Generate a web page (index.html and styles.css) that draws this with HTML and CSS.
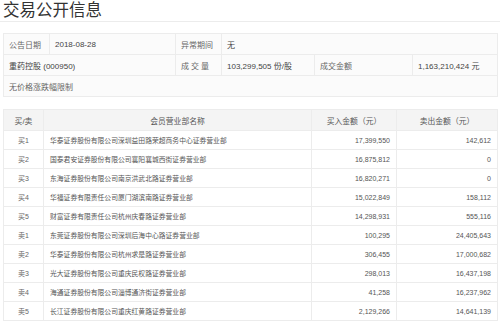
FILE: index.html
```html
<!DOCTYPE html>
<html lang="zh-CN">
<head>
  <meta charset="UTF-8">
  <title>交易公开信息</title>
  <link rel="stylesheet" href="styles.css">
</head>
<body>
  <div class="page-title">交易公开信息</div>

  <table class="info-table">
    <colgroup>
      <col style="width:46px"><col style="width:126px"><col style="width:46px">
      <col style="width:93px"><col style="width:98px"><col style="width:85px">
    </colgroup>
    <tr>
      <td class="label">公告日期</td>
      <td class="value">2018-08-28</td>
      <td class="label">异常期间</td>
      <td class="value" colspan="3">无</td>
    </tr>
    <tr>
      <td class="value" colspan="2">重药控股 (000950)</td>
      <td class="label spaced">成交量</td>
      <td class="value">103,299,505 份/股</td>
      <td class="label">成交金额</td>
      <td class="value">1,163,210,424 元</td>
    </tr>
    <tr>
      <td class="label" colspan="6">无价格涨跌幅限制</td>
    </tr>
  </table>

  <table class="trade-table">
    <colgroup>
      <col style="width:40px"><col style="width:268px"><col style="width:85px"><col style="width:101px">
    </colgroup>
    <thead>
      <tr>
        <th>买/卖</th>
        <th>会员营业部名称</th>
        <th>买入金额（元）</th>
        <th>卖出金额（元）</th>
      </tr>
    </thead>
    <tbody>
      <tr><td class="side">买1</td><td class="name">华泰证券股份有限公司深圳益田路荣超商务中心证券营业部</td><td class="num">17,399,550</td><td class="num">142,612</td></tr>
      <tr><td class="side">买2</td><td class="name">国泰君安证券股份有限公司襄阳襄城西街证券营业部</td><td class="num">16,875,812</td><td class="num">0</td></tr>
      <tr><td class="side">买3</td><td class="name">东海证券股份有限公司南京洪武北路证券营业部</td><td class="num">16,820,271</td><td class="num">0</td></tr>
      <tr><td class="side">买4</td><td class="name">华福证券有限责任公司厦门湖滨南路证券营业部</td><td class="num">15,022,849</td><td class="num">158,112</td></tr>
      <tr><td class="side">买5</td><td class="name">财富证券有限责任公司杭州庆春路证券营业部</td><td class="num">14,298,931</td><td class="num">555,116</td></tr>
      <tr><td class="side">卖1</td><td class="name">东莞证券股份有限公司深圳后海中心路证券营业部</td><td class="num">100,295</td><td class="num">24,405,643</td></tr>
      <tr><td class="side">卖2</td><td class="name">华泰证券股份有限公司杭州求是路证券营业部</td><td class="num">306,455</td><td class="num">17,000,682</td></tr>
      <tr><td class="side">卖3</td><td class="name">光大证券股份有限公司重庆民权路证券营业部</td><td class="num">298,013</td><td class="num">16,437,198</td></tr>
      <tr><td class="side">卖4</td><td class="name">海通证券股份有限公司淄博通济街证券营业部</td><td class="num">41,258</td><td class="num">16,237,962</td></tr>
      <tr><td class="side">卖5</td><td class="name">长江证券股份有限公司重庆红黄路证券营业部</td><td class="num">2,129,266</td><td class="num">14,641,139</td></tr>
    </tbody>
  </table>
</body>
</html>
```

FILE: styles.css
```css
body {
  margin: 0;
  padding: 0 3px;
  background: #fff;
  font-family: "Liberation Sans", "Noto Sans CJK SC", sans-serif;
  color: #555;
}
.page-title {
  margin: 0 -3px;
  padding: 0 0 0 3px;
  height: 21px;
  font-size: 16.5px;
  line-height: 20px;
  color: #333;
  border-bottom: 1px solid #ececec;
}
table {
  width: 494px;
  border-collapse: collapse;
  table-layout: fixed;
}
td, th {
  border: 1px solid #ececec;
  white-space: nowrap;
  overflow: hidden;
}
/* summary block */
.info-table {
  margin-top: 11px;
  background: #fbfbfb;
  font-size: 8px;
}
.info-table tr {
  height: 21px;
}
.info-table td {
  padding: 0 5px;
}
.info-table .label {
  color: #666;
}
.info-table .value {
  color: #444;
}
.info-table .spaced {
  letter-spacing: 2px;
}
/* buy / sell list */
.trade-table {
  margin-top: 12px;
  font-size: 7px;
}
.trade-table thead tr {
  height: 21px;
  background: #f4f4f4;
}
.trade-table th {
  font-weight: normal;
  font-size: 7.8px;
  color: #555;
}
.trade-table tbody tr {
  height: 19px;
}
.trade-table .side {
  text-align: center;
  color: #666;
}
.trade-table .name {
  padding-left: 6px;
  font-size: 6.8px;
  color: #555;
}
.trade-table .num {
  text-align: right;
  padding-right: 6px;
  color: #555;
}
```
